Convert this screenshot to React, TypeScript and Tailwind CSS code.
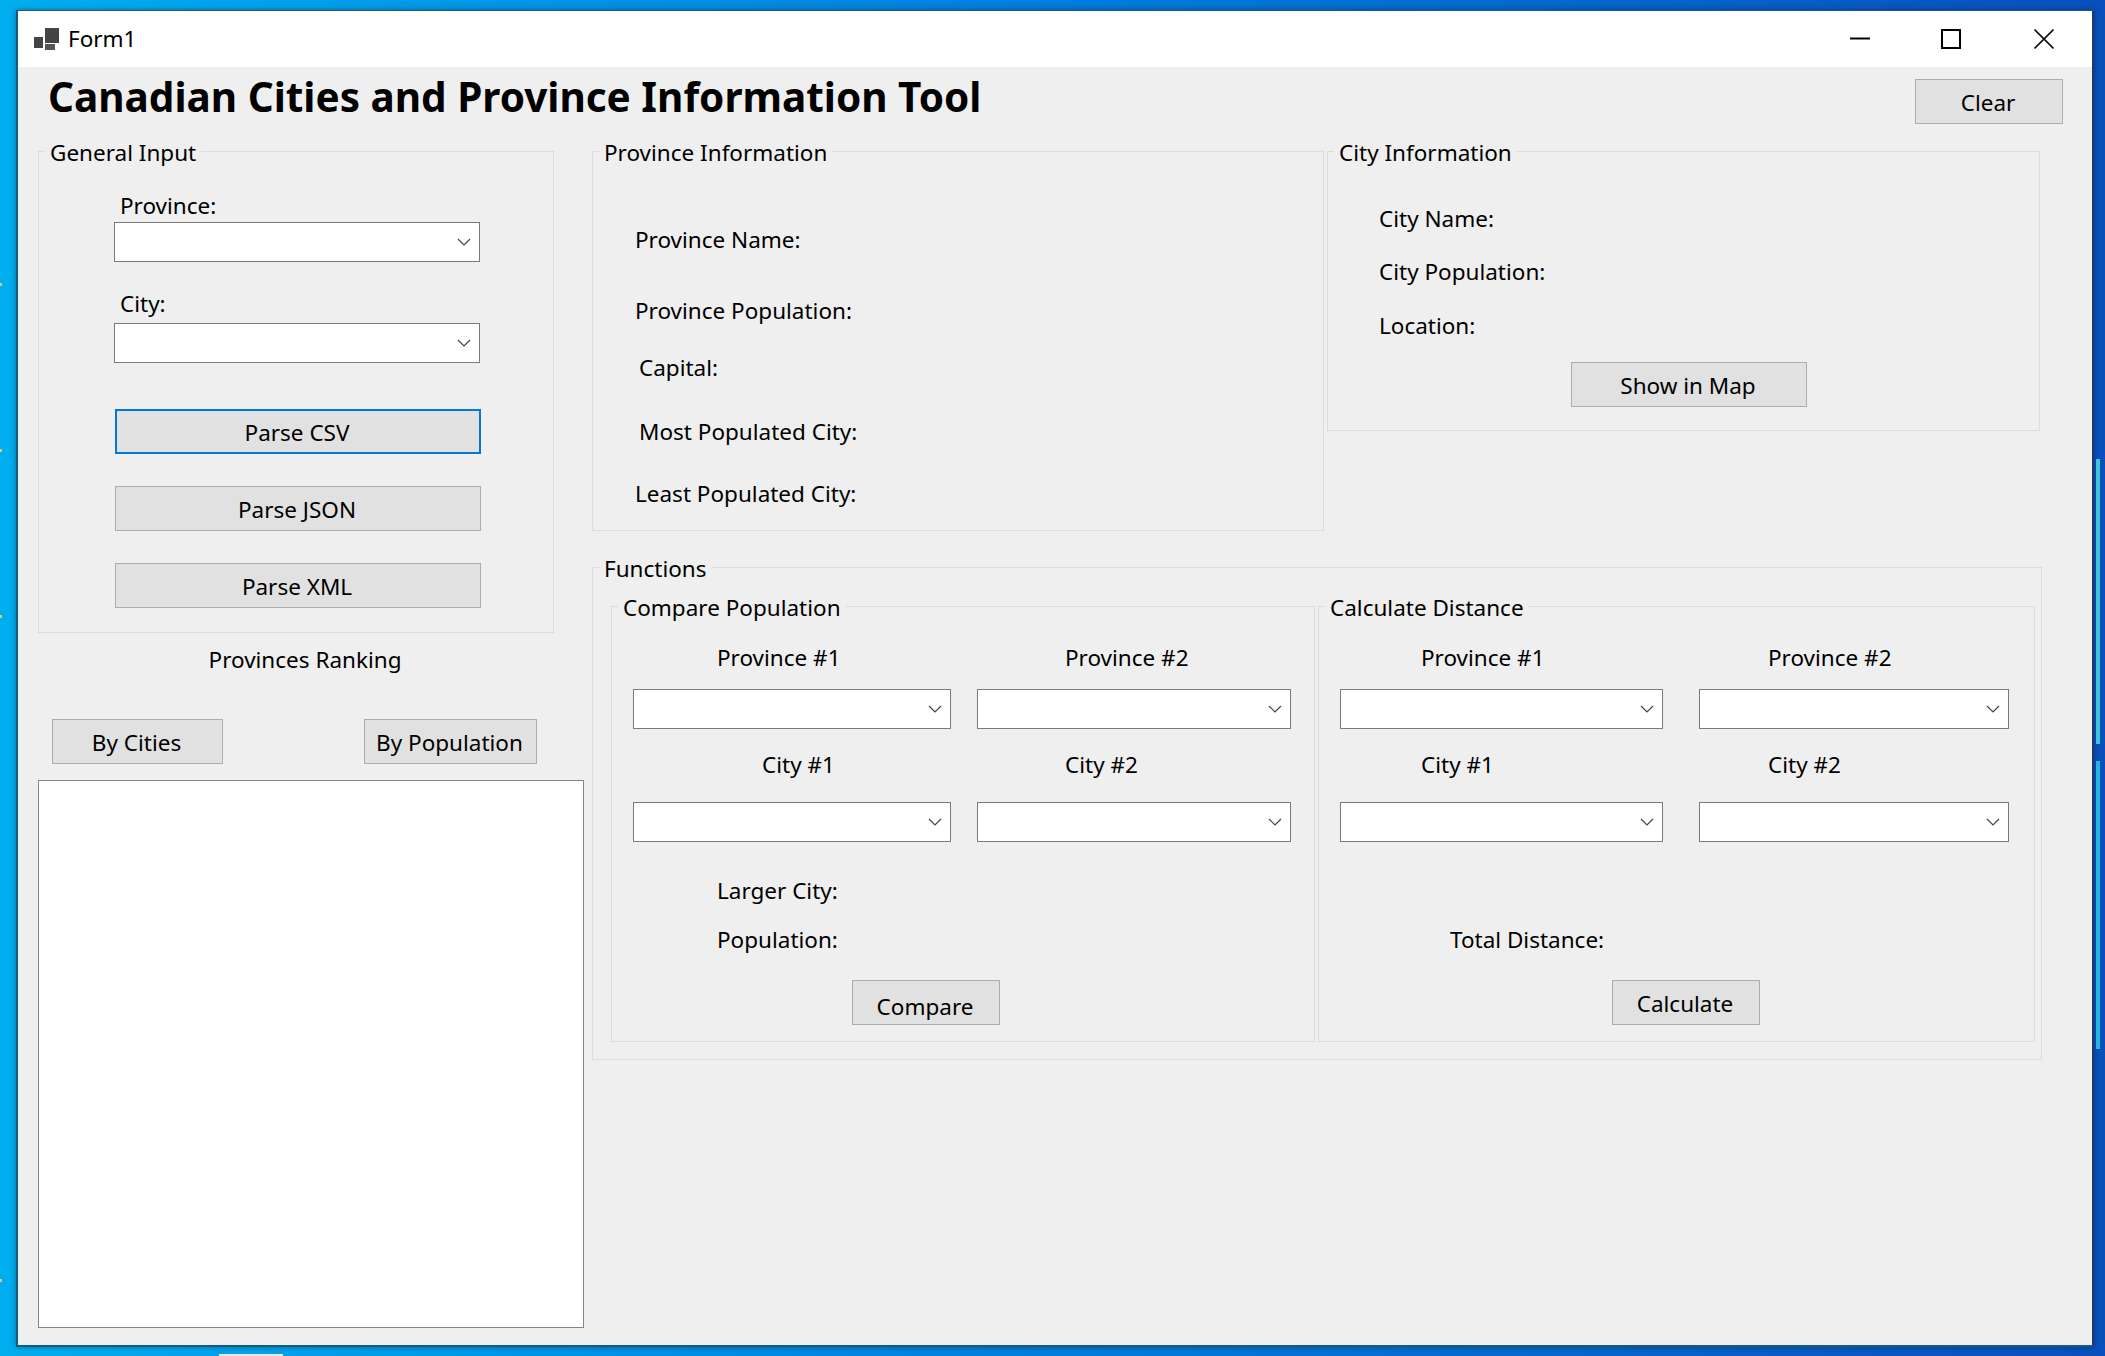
import type { ReactNode } from 'react';

const FONT = "font-['Noto_Sans','Open_Sans',sans-serif]";

function Chevron() {
  return (
    <svg width="14" height="8" viewBox="0 0 14 8" fill="none" className="mr-[8px] ml-auto">
      <path d="M1 1l6 6 6-6" stroke="#444" strokeWidth="1.2" />
    </svg>
  );
}

function Combo({ className }: { className: string }) {
  return (
    <div className={`flex h-[40px] items-center border border-[#7a7a7a] bg-white ${className}`}>
      <Chevron />
    </div>
  );
}

function Btn({ children, className, focused = false }: { children: ReactNode; className: string; focused?: boolean }) {
  return (
    <button
      className={`flex h-[45px] items-center justify-center bg-[#e1e1e1] pt-[3px] pr-[2px] leading-none ${focused ? 'border-2 border-[#0078d7]' : 'border border-[#adadad]'} ${className}`}
    >
      {children}
    </button>
  );
}

function Label({ children, className = '' }: { children: ReactNode; className?: string }) {
  return <div className={`h-[32px] leading-[34px] whitespace-nowrap ${className}`}>{children}</div>;
}

function Group({ title, children, className }: { title: string; children: ReactNode; className: string }) {
  return (
    <fieldset className={`shrink-0 border border-[#dcdcdc] ${className}`}>
      <legend className="ml-[6px] h-[32px] px-[5px] leading-[35px]">{title}</legend>
      {children}
    </fieldset>
  );
}

function TitleBar() {
  return (
    <div className="flex h-[56px] items-center bg-white pr-[38px] pl-[16px]">
      <svg width="26" height="22" viewBox="0 0 26 22" className="mt-[-1px]">
        <rect x="11" y="0" width="14" height="15" fill="#444" />
        <rect x="0" y="9" width="9" height="11" fill="#444" />
        <rect x="11" y="16" width="10" height="6" fill="#555" />
      </svg>
      <span className="ml-[8px]">Form1</span>
      <div className="ml-auto flex items-center">
        <svg width="20" height="20" viewBox="0 0 20 20">
          <path d="M0 9.5h20" stroke="#000" strokeWidth="2" />
        </svg>
        <svg width="20" height="20" viewBox="0 0 20 20" fill="none" className="ml-[71px]">
          <rect x="1" y="1" width="18" height="18" stroke="#000" strokeWidth="2" />
        </svg>
        <svg width="20" height="20" viewBox="0 0 20 20" fill="none" className="ml-[73px]">
          <path d="M0.5 0.5l19 19M19.5 0.5l-19 19" stroke="#111" strokeWidth="1.6" />
        </svg>
      </div>
    </div>
  );
}

function LeftColumn() {
  return (
    <div className="flex w-[546px] shrink-0 flex-col">
      <Group title="General Input" className="h-[498px] w-[516px]">
        <div className="flex flex-col items-start pl-[75px]">
          <Label className="mt-[22px] ml-[6px]">Province:</Label>
          <Combo className="mt-[1px] w-[366px]" />
          <Label className="mt-[25px] ml-[6px]">City:</Label>
          <Combo className="mt-[4px] w-[366px]" />
          <Btn focused className="mt-[46px] ml-[1px] w-[366px]">Parse CSV</Btn>
          <Btn className="mt-[32px] ml-[1px] w-[366px]">Parse JSON</Btn>
          <Btn className="mt-[32px] ml-[1px] w-[366px]">Parse XML</Btn>
        </div>
      </Group>
      <Label className="mt-[10px] w-[534px] text-center">Provinces Ranking</Label>
      <div className="mt-[44px] ml-[14px] flex w-[485px] justify-between">
        <Btn className="w-[171px]">By Cities</Btn>
        <Btn className="w-[173px]">By Population</Btn>
      </div>
      <div className="mt-[16px] h-[548px] border border-[#82878c] bg-white" />
    </div>
  );
}

function ProvinceInfo() {
  return (
    <Group title="Province Information" className="h-[396px] w-[732px]">
      <div className="pl-[42px]">
        <Label className="mt-[56px]">Province Name:</Label>
        <Label className="mt-[39px]">Province Population:</Label>
        <Label className="mt-[25px] ml-[4px]">Capital:</Label>
        <Label className="mt-[32px] ml-[4px]">Most Populated City:</Label>
        <Label className="mt-[30px]">Least Populated City:</Label>
      </div>
    </Group>
  );
}

function CityInfo() {
  return (
    <Group title="City Information" className="ml-[3px] h-[296px] w-[713px]">
      <div className="pl-[51px]">
        <Label className="mt-[35px]">City Name:</Label>
        <Label className="mt-[21px]">City Population:</Label>
        <Label className="mt-[22px]">Location:</Label>
        <Btn className="mt-[21px] ml-[192px] w-[236px]">Show in Map</Btn>
      </div>
    </Group>
  );
}

function ComparePopulation() {
  return (
    <Group title="Compare Population" className="h-[452px] w-[704px]">
      <div className="grid grid-cols-[318px_314px] gap-x-[26px] pl-[21px]">
        <div>
          <Label className="mt-[19px] ml-[84px]">Province #1</Label>
          <Combo className="mt-[16px]" />
          <Label className="mt-[19px] ml-[129px]">City #1</Label>
          <Combo className="mt-[22px]" />
        </div>
        <div>
          <Label className="mt-[19px] ml-[88px]">Province #2</Label>
          <Combo className="mt-[16px]" />
          <Label className="mt-[19px] ml-[88px]">City #2</Label>
          <Combo className="mt-[22px]" />
        </div>
        <div className="col-span-2">
          <Label className="mt-[32px] ml-[84px]">Larger City:</Label>
          <Label className="mt-[17px] ml-[84px]">Population:</Label>
          <Btn className="mt-[25px] ml-[219px] w-[148px] pt-[10px]">Compare</Btn>
        </div>
      </div>
    </Group>
  );
}

function CalculateDistance() {
  return (
    <Group title="Calculate Distance" className="ml-[3px] h-[452px] w-[717px]">
      <div className="grid grid-cols-[323px_310px] gap-x-[36px] pl-[21px]">
        <div>
          <Label className="mt-[19px] ml-[81px]">Province #1</Label>
          <Combo className="mt-[16px]" />
          <Label className="mt-[19px] ml-[81px]">City #1</Label>
          <Combo className="mt-[22px]" />
        </div>
        <div>
          <Label className="mt-[19px] ml-[69px]">Province #2</Label>
          <Combo className="mt-[16px]" />
          <Label className="mt-[19px] ml-[69px]">City #2</Label>
          <Combo className="mt-[22px]" />
        </div>
        <div className="col-span-2">
          <Label className="mt-[81px] ml-[110px]">Total Distance:</Label>
          <Btn className="mt-[25px] ml-[272px] w-[148px]">Calculate</Btn>
        </div>
      </div>
    </Group>
  );
}

export default function App() {
  return (
    <div className={`relative h-[1356px] w-[2105px] overflow-hidden bg-[linear-gradient(90deg,#00aef0,#0082e0_45%,#0a50bc)] text-[22.5px] text-black ${FONT}`}>
      {/* desktop bits showing around the window */}
      <div className="absolute top-[459px] right-[5px] h-[285px] w-[4px] bg-[#3fc4d8]" />
      <div className="absolute top-[761px] right-[5px] h-[288px] w-[4px] bg-[#1fb8dc]" />
      <div className="absolute bottom-0 left-[219px] h-[2px] w-[64px] bg-[#e8e8e8]" />
      <div className="absolute top-[283px] left-0 h-[3px] w-[2px] bg-[#e8c080]" />
      <div className="absolute top-[449px] left-0 h-[3px] w-[2px] bg-[#e8c080]" />
      <div className="absolute top-[615px] left-0 h-[3px] w-[2px] bg-[#e8c080]" />
      <div className="absolute top-[1279px] left-0 h-[3px] w-[2px] bg-[#e8c080]" />

      <div className="mt-[10px] ml-[16px] flex h-[1337px] w-[2078px] flex-col border-2 border-t-1 border-[#175a7e] border-r-[#1a3a6c] shadow-[0_0_6px_rgba(0,0,0,0.35)]">
        <TitleBar />
        <div className="flex-1 bg-[#efefef]">
          <div className="flex h-[68px] items-start justify-between pr-[29px] pl-[30px]">
            <h1 className="text-[40.5px] leading-[60px] font-bold whitespace-nowrap">Canadian Cities and Province Information Tool</h1>
            <Btn className="mt-[12px] h-[44px] w-[148px]">Clear</Btn>
          </div>
          <div className="flex pl-[20px]">
            <LeftColumn />
            <div className="ml-[8px] flex flex-col">
              <div className="flex items-start">
                <ProvinceInfo />
                <CityInfo />
              </div>
              <Group title="Functions" className="mt-[20px] h-[509px] w-[1450px]">
                <div className="mt-[7px] flex pl-[18px]">
                  <ComparePopulation />
                  <CalculateDistance />
                </div>
              </Group>
            </div>
          </div>
        </div>
      </div>
    </div>
  );
}
